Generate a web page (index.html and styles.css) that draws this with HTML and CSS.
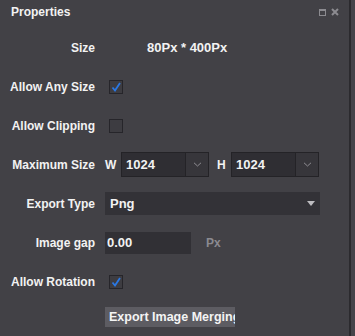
FILE: index.html
```html
<!DOCTYPE html>
<html lang="en">

<head>
    <meta charset="UTF-8">
    <meta name="viewport" content="width=device-width, initial-scale=1.0">
    <title>Properties</title>
    <link rel="stylesheet" href="styles.css">
</head>

<body>

    <div class="panel">
        <div class="titlebar">
            <span class="title">Properties</span>
            <span class="tools">
                <svg class="tool" width="7" height="7" viewBox="0 0 7 7">
                    <rect x="0.5" y="0.5" width="6" height="6" fill="none" stroke="#8c8b90" stroke-width="1"/>
                    <rect x="0" y="0" width="7" height="2" fill="#8c8b90"/>
                </svg>
                <svg class="tool" width="8" height="8" viewBox="0 0 8 8">
                    <path d="M1 1 L7 7 M7 1 L1 7" stroke="#8c8b90" stroke-width="2"/>
                </svg>
            </span>
        </div>

        <div class="rows">
            <div class="row">
                <div class="label">Size</div>
                <div class="size-value">80Px * 400Px</div>
            </div>

            <div class="row">
                <div class="label">Allow Any Size</div>
                <div class="checkbox checked">
                    <svg width="12" height="12" viewBox="0 0 12 12">
                        <path d="M2.5 6.5 L5 9.5 L10 2" fill="none" stroke="#2a78e4" stroke-width="1.8"/>
                    </svg>
                </div>
            </div>

            <div class="row">
                <div class="label">Allow Clipping</div>
                <div class="checkbox"></div>
            </div>

            <div class="row">
                <div class="label">Maximum Size</div>
                <div class="field">
                    <span class="dim-label">W</span>
                    <div class="combo">
                        <span class="combo-text">1024</span>
                        <span class="combo-arrow">
                            <svg width="9" height="5" viewBox="0 0 9 5">
                                <path d="M1 0.8 L4.5 4 L8 0.8" fill="none" stroke="#8e8d92" stroke-width="1"/>
                            </svg>
                        </span>
                    </div>
                    <span class="dim-label h">H</span>
                    <div class="combo">
                        <span class="combo-text">1024</span>
                        <span class="combo-arrow">
                            <svg width="9" height="5" viewBox="0 0 9 5">
                                <path d="M1 0.8 L4.5 4 L8 0.8" fill="none" stroke="#8e8d92" stroke-width="1"/>
                            </svg>
                        </span>
                    </div>
                </div>
            </div>

            <div class="row">
                <div class="label">Export Type</div>
                <div class="select">
                    <span>Png</span>
                    <span class="triangle"></span>
                </div>
            </div>

            <div class="row">
                <div class="label">Image gap</div>
                <div class="input">0.00</div>
                <span class="unit">Px</span>
            </div>

            <div class="row">
                <div class="label">Allow Rotation</div>
                <div class="checkbox checked">
                    <svg width="12" height="12" viewBox="0 0 12 12">
                        <path d="M2.5 6.5 L5 9.5 L10 2" fill="none" stroke="#2a78e4" stroke-width="1.8"/>
                    </svg>
                </div>
            </div>

            <div class="row button-row">
                <button class="button">Export Image Merging</button>
            </div>
        </div>
    </div>

</body>

</html>
```

FILE: styles.css
```css
/* Basic Reset */
* {
    box-sizing: border-box;
    margin: 0;
    padding: 0;
}

body {
    width: 355px;
    height: 336px;
    background-color: #45444a;
    font-family: "Liberation Sans", Arial, sans-serif;
    font-size: 12px;
    font-weight: bold;
    color: #f2f2f2;
    overflow: hidden;
}

.panel {
    width: 351px;
    height: 336px;
    background-color: #424146;
    border-right: 2px solid #2b2a2e;
}

.titlebar {
    display: flex;
    justify-content: space-between;
    align-items: center;
    height: 28px;
    padding: 0 10px 4px 11px;
}

.tools {
    display: flex;
    align-items: center;
    gap: 5px;
}

.tool {
    display: block;
}

.row {
    display: flex;
    align-items: center;
    height: 39px;
}

.label {
    width: 95px;
    text-align: right;
    margin-right: 10px;
    white-space: nowrap;
}

.size-value {
    padding-left: 42px;
    font-size: 13px;
}

.checkbox {
    width: 14px;
    height: 14px;
    margin-left: 4px;
    border: 1px solid #26252a;
    background-color: #3d3c41;
    display: flex;
    align-items: center;
    justify-content: center;
}

.checkbox svg {
    display: block;
}

.field {
    display: flex;
    align-items: center;
}

.dim-label {
    width: 16px;
}

.dim-label.h {
    width: 14px;
    margin-left: 8px;
}

.combo {
    display: flex;
    width: 88px;
    height: 25px;
    border: 1px solid #242327;
    background-color: #2f2e33;
}

.combo-text {
    flex: 1;
    padding-left: 4px;
    line-height: 23px;
    font-size: 13px;
}

.combo-arrow {
    width: 23px;
    border-left: 1px solid #242327;
    background-color: #37363b;
    display: flex;
    align-items: center;
    justify-content: center;
}

.select {
    position: relative;
    width: 215px;
    height: 23px;
    padding-left: 5px;
    line-height: 23px;
    font-size: 13px;
    background-color: #333237;
}

.triangle {
    position: absolute;
    right: 5px;
    top: 9px;
    border-left: 4px solid transparent;
    border-right: 4px solid transparent;
    border-top: 5px solid #bdbcc0;
}

.input {
    width: 86px;
    height: 22px;
    padding-left: 2px;
    line-height: 22px;
    font-size: 13px;
    background-color: #313035;
}

.unit {
    margin-left: 15px;
    color: #8b8a90;
}

.button-row {
    height: 35px;
    align-items: flex-start;
    padding-top: 6px;
    padding-left: 105px;
}

.button {
    width: 130px;
    height: 20px;
    padding-left: 4px;
    border: none;
    background-color: #5d5c62;
    color: #f4f4f4;
    font-family: "Liberation Sans", Arial, sans-serif;
    font-size: 12.5px;
    font-weight: bold;
    line-height: 20px;
    text-align: left;
    white-space: nowrap;
    overflow: hidden;
}
```
